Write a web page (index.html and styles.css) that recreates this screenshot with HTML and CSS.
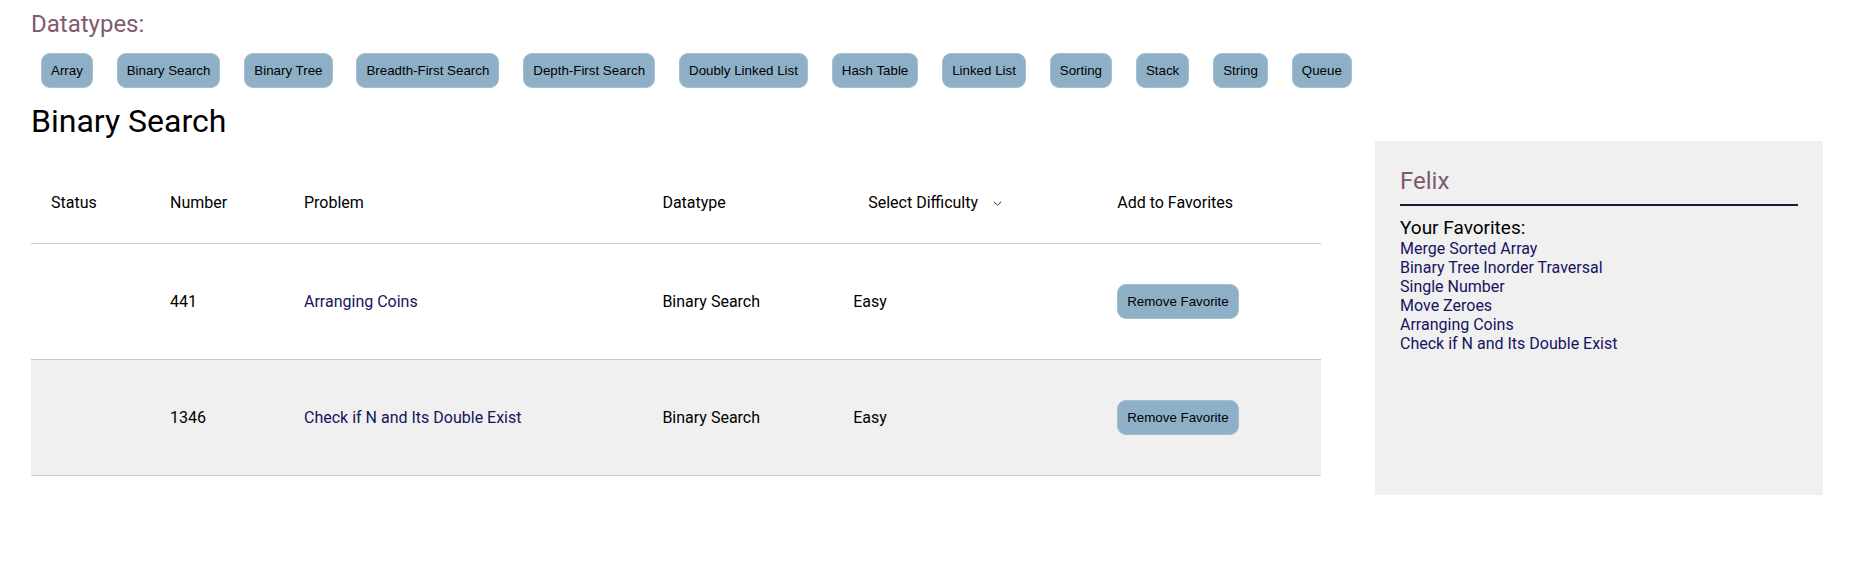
FILE: index.html
```html
<!DOCTYPE html>
<html>
<head>
<meta charset="utf-8">
<link rel="stylesheet" href="styles.css">
</head>
<body>
<div class="page">
  <div class="dt-title">Datatypes:</div>
  <div class="dt-list">
    <button class="btn">Array</button>
    <button class="btn">Binary Search</button>
    <button class="btn">Binary Tree</button>
    <button class="btn">Breadth-First Search</button>
    <button class="btn">Depth-First Search</button>
    <button class="btn">Doubly Linked List</button>
    <button class="btn">Hash Table</button>
    <button class="btn">Linked List</button>
    <button class="btn">Sorting</button>
    <button class="btn">Stack</button>
    <button class="btn">String</button>
    <button class="btn">Queue</button>
  </div>
  <h1 class="heading">Binary Search</h1>
  <div class="content">
    <table class="problems">
      <colgroup>
        <col class="c-status">
        <col class="c-number">
        <col class="c-problem">
        <col class="c-type">
        <col class="c-diff">
        <col class="c-fav">
      </colgroup>
      <thead>
        <tr>
          <th>Status</th>
          <th>Number</th>
          <th>Problem</th>
          <th>Datatype</th>
          <th><span class="select">Select Difficulty<svg class="chev" width="9" height="5" viewBox="0 0 9 5"><path d="M0.8 0.8L4.5 4.2L8.2 0.8" fill="none" stroke="#333" stroke-width="1"/></svg></span></th>
          <th>Add to Favorites</th>
        </tr>
      </thead>
      <tbody>
        <tr>
          <td></td>
          <td>441</td>
          <td><a class="link">Arranging Coins</a></td>
          <td>Binary Search</td>
          <td>Easy</td>
          <td><button class="btn">Remove Favorite</button></td>
        </tr>
        <tr class="alt">
          <td></td>
          <td>1346</td>
          <td><a class="link">Check if N and Its Double Exist</a></td>
          <td>Binary Search</td>
          <td>Easy</td>
          <td><button class="btn">Remove Favorite</button></td>
        </tr>
      </tbody>
    </table>
    <aside class="sidebar">
      <div class="name">Felix</div>
      <div class="fav-title">Your Favorites:</div>
      <ul class="fav-list">
        <li>Merge Sorted Array</li>
        <li>Binary Tree Inorder Traversal</li>
        <li>Single Number</li>
        <li>Move Zeroes</li>
        <li>Arranging Coins</li>
        <li>Check if N and Its Double Exist</li>
      </ul>
    </aside>
  </div>
</div>
</body>
</html>
```
FILE: styles.css
```css
* { box-sizing: border-box; }
html, body { margin: 0; padding: 0; background: #fff; }
body {
  font-family: Roboto, "Liberation Sans", Arial, sans-serif;
  font-size: 16px;
  color: #000;
}
.page {
  padding: 10px 35px 0 31px;
}
.dt-title {
  font-size: 24px;
  line-height: 28px;
  color: #7f5a70;
}
.dt-list {
  display: flex;
  gap: 23.9px;
  margin-top: 15px;
  padding-left: 10px;
}
.btn {
  font-family: "Liberation Sans", Arial, sans-serif;
  font-size: 13.333px;
  line-height: 15.33px;
  color: #000;
  background: #8eb0c7;
  border: 1px solid #a3bfd1;
  border-radius: 9px;
  padding: 9px 9px;
  margin: 0;
  white-space: nowrap;
  display: inline-block;
  vertical-align: middle;
}
.heading {
  font-size: 32px;
  font-weight: 400;
  line-height: 37.5px;
  margin: 15px 0 0 0;
}
.content {
  display: flex;
  align-items: flex-start;
  justify-content: space-between;
}
.problems {
  width: 1290px;
  margin-top: 22px;
  border-collapse: separate;
  border-spacing: 0;
  table-layout: fixed;
}
.c-status { width: 119px; }
.c-number { width: 134px; }
.c-problem { width: 358.4px; }
.c-type { width: 190.8px; }
.c-diff { width: 264px; }
.c-fav { width: 223.8px; }
.problems th {
  font-weight: 400;
  text-align: left;
  height: 81px;
  padding: 0 20px;
  border-bottom: 1px solid #c9c9c9;
  vertical-align: middle;
  white-space: nowrap;
}
.problems td {
  height: 116px;
  padding: 0 20px;
  border-bottom: 1px solid #c9c9c9;
  vertical-align: middle;
  white-space: nowrap;
}
.problems tr.alt td { background: #f0f0f0; }
.select {
  display: inline-flex;
  align-items: center;
  padding-left: 15px;
}
.chev { margin-left: 15px; margin-top: 1px; }
.link { color: #15145f; text-decoration: none; }
.sidebar {
  width: 448px;
  height: 354px;
  background: #f0f0f0;
  padding: 26px 25px 25px 25px;
}
.name {
  font-size: 24px;
  line-height: 28px;
  color: #7f5a70;
  padding-bottom: 9px;
  border-bottom: 2px solid #1b1b38;
}
.fav-title {
  font-size: 19px;
  margin-top: 10.5px;
}
.fav-list {
  list-style: none;
  margin: 0;
  padding: 0;
  color: #15145f;
}
.fav-list li { line-height: 19px; }
```
